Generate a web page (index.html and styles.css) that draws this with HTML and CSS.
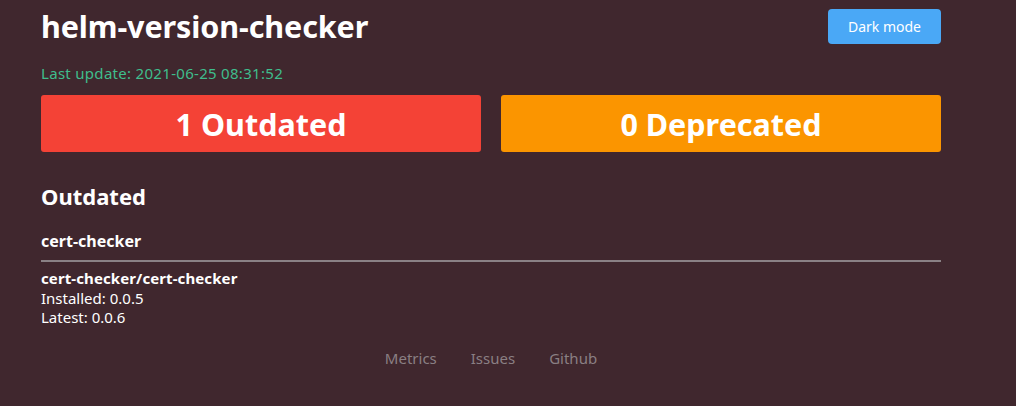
FILE: index.html
```html
<!DOCTYPE html>
<html>
<head>
<meta charset="utf-8">
<link rel="stylesheet" href="styles.css">
</head>
<body>
<div class="container">
  <header class="top">
    <h1 class="title">helm-version-checker</h1>
    <button class="mode-btn">Dark mode</button>
  </header>
  <p class="updated">Last update: 2021-06-25 08:31:52</p>
  <div class="stats">
    <div class="stat stat-outdated">1 Outdated</div>
    <div class="stat stat-deprecated">0 Deprecated</div>
  </div>
  <h2 class="section-title">Outdated</h2>
  <h3 class="release-name">cert-checker</h3>
  <div class="chart">
    <div class="chart-name">cert-checker/cert-checker</div>
    <div class="chart-line">Installed: 0.0.5</div>
    <div class="chart-line">Latest: 0.0.6</div>
  </div>
  <footer class="footer">
    <a class="footer-link">Metrics</a>
    <a class="footer-link">Issues</a>
    <a class="footer-link">Github</a>
  </footer>
</div>
</body>
</html>
```
FILE: styles.css
```css
html, body {
  margin: 0;
  padding: 0;
  background: #40272e;
  color: #ffffff;
  font-family: "Noto Sans", "Open Sans", sans-serif;
}
.container {
  width: 900px;
  margin-left: 41px;
}
.top {
  display: flex;
  justify-content: space-between;
  align-items: flex-start;
  height: 62px;
}
.title {
  margin: 0;
  padding-top: 6px;
  font-size: 30.5px;
  font-weight: 700;
  line-height: 40px;
  letter-spacing: -0.1px;
}
.mode-btn {
  margin-top: 9px;
  width: 113px;
  height: 35px;
  border: none;
  border-radius: 4px;
  background: #4aa8f6;
  color: #ffffff;
  font-family: inherit;
  font-size: 14px;
}
.updated {
  margin: 0;
  color: #3fbd8c;
  font-size: 15px;
  line-height: 22px;
  height: 33px;
  letter-spacing: 0.3px;
}
.stats {
  display: flex;
  gap: 20px;
}
.stat {
  flex: 1;
  height: 57px;
  border-radius: 3px;
  display: flex;
  align-items: center;
  justify-content: center;
  font-size: 30.5px;
  font-weight: 700;
}
.stat-outdated { background: #f44236; }
.stat-deprecated { background: #fb9500; }
.section-title {
  margin: 28px 0 0;
  font-size: 22px;
  line-height: 32px;
  font-weight: 700;
}
.release-name {
  margin: 17px 0 0;
  font-size: 16px;
  line-height: 24px;
  font-weight: 700;
  padding-bottom: 7px;
  border-bottom: 2px solid #8a8185;
}
.chart {
  margin-top: 7px;
  font-size: 15px;
  line-height: 19.5px;
}
.chart-name { font-weight: 700; letter-spacing: 0.1px; }
.footer {
  display: flex;
  justify-content: center;
  gap: 34px;
  margin-top: 20px;
  font-size: 15px;
  line-height: 20px;
}
.footer-link {
  color: #8a7f83;
  text-decoration: none;
}
```
